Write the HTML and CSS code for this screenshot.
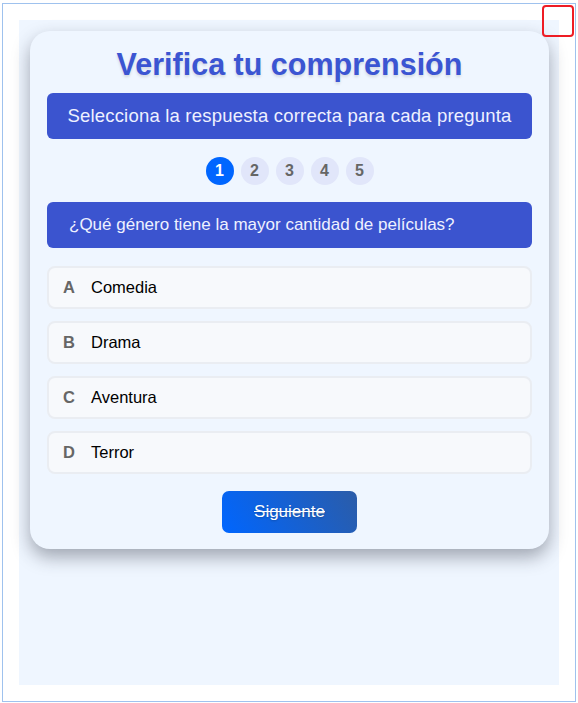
FILE: index.html
```html
<!DOCTYPE html>
<html lang="es">
<head>
<meta charset="utf-8">
<title>Verifica tu comprensión</title>
<link rel="stylesheet" href="styles.css">
</head>
<body>
<div class="frame">
  <div class="marker"></div>
  <div class="stage">
    <div class="card">
      <h1 class="title">Verifica tu comprensión</h1>
      <div class="banner">Selecciona la respuesta correcta para cada pregunta</div>
      <div class="steps">
        <span class="step active">1</span>
        <span class="step">2</span>
        <span class="step">3</span>
        <span class="step">4</span>
        <span class="step">5</span>
      </div>
      <div class="question">¿Qué género tiene la mayor cantidad de películas?</div>
      <div class="options">
        <div class="option"><span class="letter">A</span><span class="label">Comedia</span></div>
        <div class="option"><span class="letter">B</span><span class="label">Drama</span></div>
        <div class="option"><span class="letter">C</span><span class="label">Aventura</span></div>
        <div class="option"><span class="letter">D</span><span class="label">Terror</span></div>
      </div>
      <div class="actions">
        <button class="next" type="button">Siguiente</button>
      </div>
    </div>
  </div>
</div>
</body>
</html>
```
FILE: styles.css
```css
* { box-sizing: border-box; }
html, body { margin: 0; padding: 0; background: #ffffff; }
body { font-family: "Liberation Sans", Arial, sans-serif; }

.frame {
  position: relative;
  margin: 3px 2px 2px 2px;
  width: 574px;
  height: 699px;
  border: 1px solid #9fc2ee;
  padding: 16px;
}

.marker {
  position: absolute;
  top: 1px;
  right: 1px;
  width: 32px;
  height: 32px;
  border: 2px solid #ee1c24;
  border-radius: 4px;
}

.stage {
  background: #eff6ff;
  height: 100%;
  padding: 11px 10px 11px 11px;
}

.card {
  background: #eff6ff;
  border-radius: 20px;
  box-shadow: 0 8px 18px rgba(40, 45, 60, 0.4);
  padding: 16px 17px 16px 17px;
}

.title {
  margin: 0 0 12px 0;
  font-size: 30.5px;
  line-height: 34px;
  font-weight: bold;
  color: #3b55d2;
  text-align: center;
  text-shadow: 0 2px 3px rgba(0, 0, 0, 0.12);
}

.banner {
  background: #3b54cf;
  color: #eef1ff;
  border-radius: 6px;
  height: 46px;
  display: flex;
  align-items: center;
  justify-content: center;
  font-size: 18.5px;
  letter-spacing: 0.2px;
}

.steps {
  display: flex;
  justify-content: center;
  gap: 7px;
  margin: 18px 0 17px 0;
}

.step {
  width: 28px;
  height: 28px;
  border-radius: 50%;
  background: #e1e6fa;
  color: #666666;
  font-weight: bold;
  font-size: 16px;
  display: flex;
  align-items: center;
  justify-content: center;
}

.step.active {
  background: #0066ff;
  color: #ffffff;
}

.question {
  background: #3b54cf;
  color: #eef1ff;
  border-radius: 6px;
  height: 46px;
  display: flex;
  align-items: center;
  padding-left: 22px;
  font-size: 17px;
}

.options {
  display: flex;
  flex-direction: column;
  gap: 12px;
  margin-top: 18px;
}

.option {
  height: 43px;
  background: #f7f9fc;
  border: 2px solid #eaedf2;
  border-radius: 8px;
  display: flex;
  align-items: center;
  padding-left: 14px;
  font-size: 16.5px;
  color: #000000;
}

.letter {
  width: 28px;
  font-weight: bold;
  color: #666666;
}

.actions {
  display: flex;
  justify-content: center;
  margin-top: 17px;
}

.next {
  width: 135px;
  height: 42px;
  border: none;
  border-radius: 7px;
  background: linear-gradient(60deg, #0066ff 0%, #2b5ca8 100%);
  color: #ffffff;
  font-family: "Liberation Sans", Arial, sans-serif;
  font-size: 17px;
  text-decoration: line-through;
  text-shadow: 0 1px 2px rgba(0, 0, 0, 0.2);
}
```
